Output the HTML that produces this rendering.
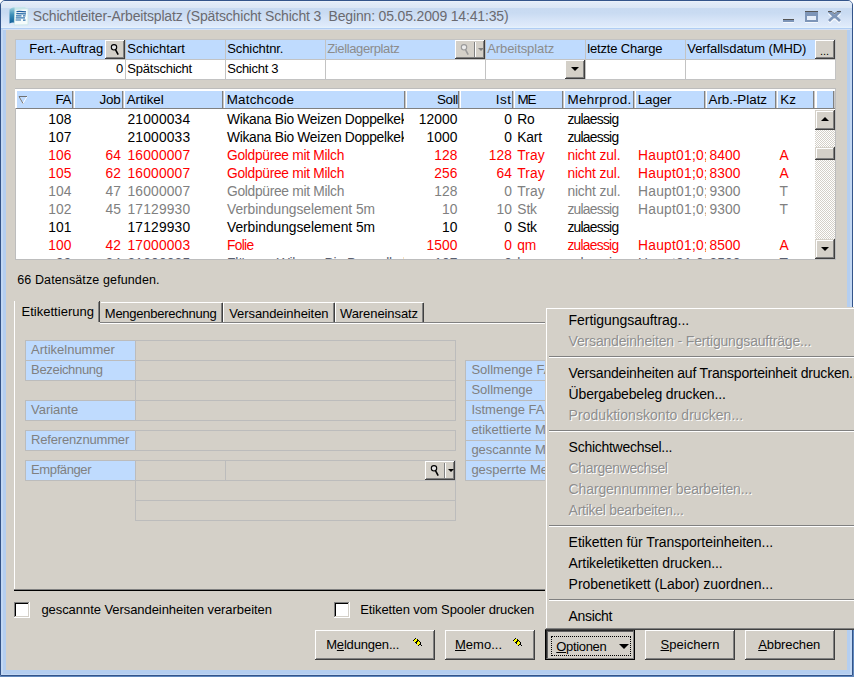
<!DOCTYPE html>
<html><head><meta charset="utf-8"><style>
html,body{margin:0;padding:0;}
body{width:854px;height:677px;position:relative;overflow:hidden;background:#fff;font-family:'Liberation Sans', sans-serif;}
u{text-decoration:underline;text-underline-offset:1px;}
</style></head><body>
<div style="position:absolute;left:0px;top:676px;width:854px;height:1px;background:#6088bd"></div>
<div style="position:absolute;left:853px;top:629px;width:1px;height:48px;background:#6088bd"></div>
<div style="position:absolute;left:0;top:0;width:851px;height:674px;border:1px solid #33548a;border-radius:5px 5px 0 0;background:#b4cef0"></div>
<div style="position:absolute;left:1px;top:1px;width:851px;height:27px;border-radius:4px 4px 0 0;background:linear-gradient(#f0f5fc 0px,#e3ecf8 1px,#dae6f5 6.9px,#c8daf1 7px,#c9dbf2 12px,#d6e4f7 19px,#dfeafa 25px,#e6f3fd 27px)"></div>
<div style="position:absolute;left:1px;top:28px;width:851px;height:1px;background:#b0cdf3"></div>
<div style="position:absolute;left:1px;top:29px;width:851px;height:1px;background:#d6e1f3"></div>
<div style="position:absolute;left:1px;top:29px;width:2px;height:645px;background:#c3d8f3"></div>
<div style="position:absolute;left:850px;top:29px;width:2px;height:646px;background:#c3d8f3"></div>
<div style="position:absolute;left:6px;top:30px;width:841px;height:640px;background:#d4d0c8"></div>
<div style="position:absolute;left:1px;top:674px;width:851px;height:1px;background:#c3d8f3"></div>
<svg style="position:absolute;left:6px;top:4px" width="24" height="24" viewBox="0 0 24 24">
<defs><linearGradient id="ib" x1="0" x2="0" y1="0" y2="1"><stop offset="0" stop-color="#9fd3de"/><stop offset="0.45" stop-color="#3d8fb8"/><stop offset="1" stop-color="#0f5f9a"/></linearGradient></defs>
<path d="M6 3.5 L19.5 3 L19.5 6 L9 6.5 Z" fill="#c6e6ea"/>
<path d="M3.5 5.5 Q6 3 8.5 3.5 L9.5 19 Q6 18 3.5 19.5 Z" fill="url(#ib)"/>
<path d="M9 5.5 L22 4.8 L22 20.8 L8.2 21 Z" fill="#f4fbfb" stroke="#c8e6e6" stroke-width="0.8"/>
<path d="M10.5 7.6 Q13 7 20 7.8" stroke="#1d5c9c" stroke-width="1.2" fill="none"/>
<path d="M10.3 9.7 L20 9.8" stroke="#2368a6" stroke-width="1.2"/>
<path d="M10 11.8 L15.5 11.8 M17 11.8 L19.5 11.8" stroke="#2a6eaa" stroke-width="1.2"/>
<path d="M9.8 13.9 L19 13.9" stroke="#2a6eaa" stroke-width="1.2"/>
<path d="M9.6 16 L15 16 M17 16.1 L19.5 16.1" stroke="#2a6eaa" stroke-width="1.2"/>
</svg>
<span style="position:absolute;left:32.80px;top:6px;font-size:14px;line-height:20px;color:#6a6a70;white-space:pre;letter-spacing:-0.166px;">Schichtleiter-Arbeitsplatz (Spätschicht Schicht 3  Beginn: 05.05.2009 14:41:35)</span>
<div style="position:absolute;left:783px;top:19px;width:11px;height:3px;background:#7d95b8;border-top:1px solid #555;box-sizing:border-box"></div>
<div style="position:absolute;left:783px;top:22px;width:11px;height:1px;background:#f4f8fd"></div>
<div style="position:absolute;left:805px;top:11px;width:13px;height:11px;background:#7d95b8;border-top:1px solid #555;box-sizing:border-box"></div>
<div style="position:absolute;left:807px;top:16px;width:9px;height:4px;background:#e6eefa"></div>
<div style="position:absolute;left:805px;top:22px;width:13px;height:1px;background:#f4f8fd"></div>
<svg style="position:absolute;left:826px;top:9px" width="17" height="15" viewBox="0 0 17 15">
<path d="M3 3 L8.5 8.3 L14 3 M3 12.5 L8.5 7.2 L14 12.5" fill="none" stroke="#f6f9fd" stroke-width="3" transform="translate(0,1)"/>
<path d="M3 2.5 L8.5 7.8 L14 2.5 M3 12 L8.5 6.7 L14 12" fill="none" stroke="#7d95b8" stroke-width="2.6"/>
<path d="M2 2.5 H6 L8.5 5 L11 2.5 H15" fill="none" stroke="#585858" stroke-width="1"/>
</svg>
<div style="position:absolute;left:15px;top:39px;width:821px;height:41px;border:1px solid #c3c3c3;box-sizing:border-box;background:#fff"></div>
<div style="position:absolute;left:16px;top:40px;width:819px;height:19px;background:#bfdbfe"></div>
<div style="position:absolute;left:16px;top:59px;width:819px;height:1px;background:#c3c3c3"></div>
<div style="position:absolute;left:125px;top:40px;width:1px;height:39px;background:#c3c3c3"></div>
<div style="position:absolute;left:225px;top:40px;width:1px;height:39px;background:#c3c3c3"></div>
<div style="position:absolute;left:325px;top:40px;width:1px;height:39px;background:#c3c3c3"></div>
<div style="position:absolute;left:485px;top:40px;width:1px;height:39px;background:#c3c3c3"></div>
<div style="position:absolute;left:585px;top:40px;width:1px;height:39px;background:#c3c3c3"></div>
<div style="position:absolute;left:685px;top:40px;width:1px;height:39px;background:#c3c3c3"></div>
<div style="position:absolute;left:105px;top:40px;width:20px;height:19px;background:#d4d0c8"></div>
<div style="position:absolute;left:105px;top:40px;width:19px;height:1px;background:#fff"></div>
<div style="position:absolute;left:105px;top:40px;width:1px;height:18px;background:#fff"></div>
<div style="position:absolute;left:105px;top:58px;width:20px;height:1px;background:#404040"></div>
<div style="position:absolute;left:124px;top:40px;width:1px;height:19px;background:#404040"></div>
<div style="position:absolute;left:106px;top:57px;width:18px;height:1px;background:#808080"></div>
<div style="position:absolute;left:123px;top:41px;width:1px;height:17px;background:#808080"></div>
<svg style="position:absolute;left:109px;top:42px" width="12" height="15" viewBox="0 0 12 15">
<circle cx="5" cy="5.3" r="2.7" fill="#e4e4e4" stroke="#000" stroke-width="1.1"/>
<path d="M6.6 7.9 L9.2 12.6" stroke="#000" stroke-width="1.6"/>
</svg>
<span style="position:absolute;left:29.20px;top:39px;font-size:13px;line-height:20px;color:#000;white-space:pre;letter-spacing:0.095px;">Fert.-Auftrag</span>
<span style="position:absolute;left:127.30px;top:39px;font-size:13px;line-height:20px;color:#000;white-space:pre;letter-spacing:-0.021px;">Schichtart</span>
<span style="position:absolute;left:227.30px;top:39px;font-size:13px;line-height:20px;color:#000;white-space:pre;letter-spacing:-0.109px;">Schichtnr.</span>
<span style="position:absolute;left:327.30px;top:39px;font-size:13px;line-height:20px;color:#8c8c8c;white-space:pre;letter-spacing:-0.381px;">Ziellagerplatz</span>
<div style="position:absolute;left:455px;top:40px;width:30px;height:19px;background:#d4d0c8"></div>
<div style="position:absolute;left:455px;top:40px;width:29px;height:1px;background:#fff"></div>
<div style="position:absolute;left:455px;top:40px;width:1px;height:18px;background:#fff"></div>
<div style="position:absolute;left:455px;top:58px;width:30px;height:1px;background:#404040"></div>
<div style="position:absolute;left:484px;top:40px;width:1px;height:19px;background:#404040"></div>
<div style="position:absolute;left:456px;top:57px;width:28px;height:1px;background:#808080"></div>
<div style="position:absolute;left:483px;top:41px;width:1px;height:17px;background:#808080"></div>
<svg style="position:absolute;left:459px;top:42px" width="12" height="15" viewBox="0 0 12 15">
<circle cx="5" cy="5.3" r="2.7" fill="#ececec" stroke="#9a9a9a" stroke-width="1.1"/>
<path d="M6.6 7.9 L9.2 12.6" stroke="#9a9a9a" stroke-width="1.6"/>
</svg>
<div style="position:absolute;left:474px;top:42px;width:1px;height:15px;background:#808080"></div>
<div style="position:absolute;left:475px;top:42px;width:1px;height:15px;background:#fff"></div>
<div style="position:absolute;left:478px;top:48px;width:0;height:0;border-left:3px solid transparent;border-right:3px solid transparent;border-top:3px solid #808080"></div>
<span style="position:absolute;left:487.20px;top:39px;font-size:13px;line-height:20px;color:#8c8c8c;white-space:pre;letter-spacing:-0.077px;">Arbeitsplatz</span>
<span style="position:absolute;left:587.30px;top:39px;font-size:13px;line-height:20px;color:#000;white-space:pre;letter-spacing:-0.179px;">letzte Charge</span>
<span style="position:absolute;left:687.30px;top:39px;font-size:13px;line-height:20px;color:#000;white-space:pre;letter-spacing:-0.086px;">Verfallsdatum (MHD)</span>
<div style="position:absolute;left:815px;top:40px;width:20px;height:19px;background:#d4d0c8"></div>
<div style="position:absolute;left:815px;top:40px;width:19px;height:1px;background:#fff"></div>
<div style="position:absolute;left:815px;top:40px;width:1px;height:18px;background:#fff"></div>
<div style="position:absolute;left:815px;top:58px;width:20px;height:1px;background:#404040"></div>
<div style="position:absolute;left:834px;top:40px;width:1px;height:19px;background:#404040"></div>
<div style="position:absolute;left:816px;top:57px;width:18px;height:1px;background:#808080"></div>
<div style="position:absolute;left:833px;top:41px;width:1px;height:17px;background:#808080"></div>
<span style="position:absolute;left:820.00px;top:41px;font-size:11px;line-height:20px;color:#000;white-space:pre;letter-spacing:0.000px;">...</span>
<span style="position:absolute;left:116.00px;top:59px;font-size:13px;line-height:20px;color:#000;white-space:pre;letter-spacing:-0.034px;">0</span>
<span style="position:absolute;left:127.30px;top:59px;font-size:13px;line-height:20px;color:#000;white-space:pre;letter-spacing:-0.228px;">Spätschicht</span>
<span style="position:absolute;left:227.30px;top:59px;font-size:13px;line-height:20px;color:#000;white-space:pre;letter-spacing:-0.276px;">Schicht 3</span>
<div style="position:absolute;left:565px;top:60px;width:20px;height:19px;background:#d4d0c8"></div>
<div style="position:absolute;left:565px;top:60px;width:19px;height:1px;background:#fff"></div>
<div style="position:absolute;left:565px;top:60px;width:1px;height:18px;background:#fff"></div>
<div style="position:absolute;left:565px;top:78px;width:20px;height:1px;background:#404040"></div>
<div style="position:absolute;left:584px;top:60px;width:1px;height:19px;background:#404040"></div>
<div style="position:absolute;left:566px;top:77px;width:18px;height:1px;background:#808080"></div>
<div style="position:absolute;left:583px;top:61px;width:1px;height:17px;background:#808080"></div>
<div style="position:absolute;left:571px;top:67px;width:0;height:0;border-left:4px solid transparent;border-right:4px solid transparent;border-top:4px solid #000"></div>
<div style="position:absolute;left:15px;top:88px;width:821px;height:172px;border:1px solid #bdbdbd;box-sizing:border-box;background:#fff"></div>
<div style="position:absolute;left:15px;top:89px;width:820px;height:2px;background:#fff"></div>
<div style="position:absolute;left:17px;top:91px;width:818px;height:17px;background:#bfdbfe"></div>
<div style="position:absolute;left:16px;top:89px;width:1px;height:19px;background:#fff"></div>
<div style="position:absolute;left:16px;top:108px;width:819px;height:1px;background:#808080"></div>
<div style="position:absolute;left:15px;top:89px;width:1px;height:19px;background:#fff"></div>
<div style="position:absolute;left:72px;top:91px;width:1px;height:17px;background:#808080"></div>
<div style="position:absolute;left:73px;top:91px;width:1px;height:17px;background:#c8c8c8"></div>
<div style="position:absolute;left:74px;top:89px;width:1px;height:19px;background:#fff"></div>
<div style="position:absolute;left:122px;top:91px;width:1px;height:17px;background:#808080"></div>
<div style="position:absolute;left:123px;top:91px;width:1px;height:17px;background:#c8c8c8"></div>
<div style="position:absolute;left:124px;top:89px;width:1px;height:19px;background:#fff"></div>
<div style="position:absolute;left:222px;top:91px;width:1px;height:17px;background:#808080"></div>
<div style="position:absolute;left:223px;top:91px;width:1px;height:17px;background:#c8c8c8"></div>
<div style="position:absolute;left:224px;top:89px;width:1px;height:19px;background:#fff"></div>
<div style="position:absolute;left:404px;top:91px;width:1px;height:17px;background:#808080"></div>
<div style="position:absolute;left:405px;top:91px;width:1px;height:17px;background:#c8c8c8"></div>
<div style="position:absolute;left:406px;top:89px;width:1px;height:19px;background:#fff"></div>
<div style="position:absolute;left:458px;top:91px;width:1px;height:17px;background:#808080"></div>
<div style="position:absolute;left:459px;top:91px;width:1px;height:17px;background:#c8c8c8"></div>
<div style="position:absolute;left:460px;top:89px;width:1px;height:19px;background:#fff"></div>
<div style="position:absolute;left:512px;top:91px;width:1px;height:17px;background:#808080"></div>
<div style="position:absolute;left:513px;top:91px;width:1px;height:17px;background:#c8c8c8"></div>
<div style="position:absolute;left:514px;top:89px;width:1px;height:19px;background:#fff"></div>
<div style="position:absolute;left:562px;top:91px;width:1px;height:17px;background:#808080"></div>
<div style="position:absolute;left:563px;top:91px;width:1px;height:17px;background:#c8c8c8"></div>
<div style="position:absolute;left:564px;top:89px;width:1px;height:19px;background:#fff"></div>
<div style="position:absolute;left:633px;top:91px;width:1px;height:17px;background:#808080"></div>
<div style="position:absolute;left:634px;top:91px;width:1px;height:17px;background:#c8c8c8"></div>
<div style="position:absolute;left:635px;top:89px;width:1px;height:19px;background:#fff"></div>
<div style="position:absolute;left:704px;top:91px;width:1px;height:17px;background:#808080"></div>
<div style="position:absolute;left:705px;top:91px;width:1px;height:17px;background:#c8c8c8"></div>
<div style="position:absolute;left:706px;top:89px;width:1px;height:19px;background:#fff"></div>
<div style="position:absolute;left:775px;top:91px;width:1px;height:17px;background:#808080"></div>
<div style="position:absolute;left:776px;top:91px;width:1px;height:17px;background:#c8c8c8"></div>
<div style="position:absolute;left:777px;top:89px;width:1px;height:19px;background:#fff"></div>
<div style="position:absolute;left:813px;top:91px;width:1px;height:17px;background:#808080"></div>
<div style="position:absolute;left:814px;top:91px;width:1px;height:17px;background:#c8c8c8"></div>
<div style="position:absolute;left:815px;top:89px;width:1px;height:19px;background:#fff"></div>
<div style="position:absolute;left:833px;top:91px;width:1px;height:17px;background:#808080"></div>
<div style="position:absolute;left:834px;top:91px;width:1px;height:17px;background:#c8c8c8"></div>
<div style="position:absolute;left:816px;top:89px;width:1px;height:19px;background:#fff"></div>
<svg style="position:absolute;left:18px;top:95px" width="10" height="9" viewBox="0 0 10 9">
<path d="M1 1.5 H9 L5 8.5 Z" fill="none" stroke="#fff" stroke-width="1"/>
<path d="M1 1.5 H9 M1 1.5 L5 8.5" fill="none" stroke="#707070" stroke-width="1"/>
</svg>
<span style="position:absolute;left:55.50px;top:90px;font-size:13.4px;line-height:20px;color:#000;white-space:pre;letter-spacing:-0.438px;">FA</span>
<span style="position:absolute;left:99.50px;top:90px;font-size:13.4px;line-height:20px;color:#000;white-space:pre;letter-spacing:-0.198px;">Job</span>
<span style="position:absolute;left:126.70px;top:90px;font-size:13.4px;line-height:20px;color:#000;white-space:pre;letter-spacing:-0.031px;">Artikel</span>
<span style="position:absolute;left:226.70px;top:90px;font-size:13.4px;line-height:20px;color:#000;white-space:pre;letter-spacing:0.220px;">Matchcode</span>
<span style="position:absolute;left:437.00px;top:90px;font-size:13.4px;line-height:20px;color:#000;white-space:pre;letter-spacing:-0.336px;">Soll</span>
<span style="position:absolute;left:495.70px;top:90px;font-size:13.4px;line-height:20px;color:#000;white-space:pre;letter-spacing:0.620px;">Ist</span>
<span style="position:absolute;left:517.50px;top:90px;font-size:13.4px;line-height:20px;color:#000;white-space:pre;letter-spacing:-1.047px;">ME</span>
<span style="position:absolute;left:567.50px;top:90px;font-size:13.4px;line-height:20px;color:#000;white-space:pre;letter-spacing:0.330px;">Mehrprod.</span>
<span style="position:absolute;left:637.80px;top:90px;font-size:13.4px;line-height:20px;color:#000;white-space:pre;letter-spacing:-0.150px;">Lager</span>
<span style="position:absolute;left:708.50px;top:90px;font-size:13.4px;line-height:20px;color:#000;white-space:pre;letter-spacing:-0.030px;">Arb.-Platz</span>
<span style="position:absolute;left:780.30px;top:90px;font-size:13.4px;line-height:20px;color:#000;white-space:pre;letter-spacing:0.030px;">Kz</span>
<div style="position:absolute;left:16px;top:109px;width:58px;height:150px;overflow:hidden"><span style="position:absolute;left:48.25px;top:110px;font-size:13.8px;line-height:20px;color:#000;white-space:pre;letter-spacing:0.073px;;left:32.25px;top:1.00px">108</span></div>
<div style="position:absolute;left:124px;top:109px;width:100px;height:150px;overflow:hidden"><span style="position:absolute;left:127.50px;top:110px;font-size:13.8px;line-height:20px;color:#000;white-space:pre;letter-spacing:0.176px;;left:3.50px;top:1.00px">21000034</span></div>
<div style="position:absolute;left:224px;top:109px;width:180px;height:150px;overflow:hidden"><span style="position:absolute;left:227.00px;top:110px;font-size:13.8px;line-height:20px;color:#000;white-space:pre;letter-spacing:-0.300px;;left:3.00px;top:1.00px">Wikana Bio Weizen Doppelkeks</span></div>
<div style="position:absolute;left:406px;top:109px;width:54px;height:150px;overflow:hidden"><span style="position:absolute;left:418.75px;top:110px;font-size:13.8px;line-height:20px;color:#000;white-space:pre;letter-spacing:0.075px;;left:12.75px;top:1.00px">12000</span></div>
<div style="position:absolute;left:460px;top:109px;width:54px;height:150px;overflow:hidden"><span style="position:absolute;left:504.25px;top:110px;font-size:13.8px;line-height:20px;color:#000;white-space:pre;letter-spacing:0.062px;;left:44.25px;top:1.00px">0</span></div>
<div style="position:absolute;left:514px;top:109px;width:50px;height:150px;overflow:hidden"><span style="position:absolute;left:517.30px;top:110px;font-size:13.8px;line-height:20px;color:#000;white-space:pre;letter-spacing:-0.320px;;left:3.30px;top:1.00px">Ro</span></div>
<div style="position:absolute;left:564px;top:109px;width:71px;height:150px;overflow:hidden"><span style="position:absolute;left:567.40px;top:110px;font-size:13.8px;line-height:20px;color:#000;white-space:pre;letter-spacing:-0.726px;;left:3.40px;top:1.00px">zulaessig</span></div>
<div style="position:absolute;left:16px;top:109px;width:58px;height:150px;overflow:hidden"><span style="position:absolute;left:48.25px;top:128px;font-size:13.8px;line-height:20px;color:#000;white-space:pre;letter-spacing:0.073px;;left:32.25px;top:19.00px">107</span></div>
<div style="position:absolute;left:124px;top:109px;width:100px;height:150px;overflow:hidden"><span style="position:absolute;left:127.50px;top:128px;font-size:13.8px;line-height:20px;color:#000;white-space:pre;letter-spacing:0.176px;;left:3.50px;top:19.00px">21000033</span></div>
<div style="position:absolute;left:224px;top:109px;width:180px;height:150px;overflow:hidden"><span style="position:absolute;left:227.00px;top:128px;font-size:13.8px;line-height:20px;color:#000;white-space:pre;letter-spacing:-0.300px;;left:3.00px;top:19.00px">Wikana Bio Weizen Doppelkeks</span></div>
<div style="position:absolute;left:406px;top:109px;width:54px;height:150px;overflow:hidden"><span style="position:absolute;left:426.50px;top:128px;font-size:13.8px;line-height:20px;color:#000;white-space:pre;letter-spacing:0.074px;;left:20.50px;top:19.00px">1000</span></div>
<div style="position:absolute;left:460px;top:109px;width:54px;height:150px;overflow:hidden"><span style="position:absolute;left:504.25px;top:128px;font-size:13.8px;line-height:20px;color:#000;white-space:pre;letter-spacing:0.062px;;left:44.25px;top:19.00px">0</span></div>
<div style="position:absolute;left:514px;top:109px;width:50px;height:150px;overflow:hidden"><span style="position:absolute;left:517.30px;top:128px;font-size:13.8px;line-height:20px;color:#000;white-space:pre;letter-spacing:-0.203px;;left:3.30px;top:19.00px">Kart</span></div>
<div style="position:absolute;left:564px;top:109px;width:71px;height:150px;overflow:hidden"><span style="position:absolute;left:567.40px;top:128px;font-size:13.8px;line-height:20px;color:#000;white-space:pre;letter-spacing:-0.726px;;left:3.40px;top:19.00px">zulaessig</span></div>
<div style="position:absolute;left:16px;top:109px;width:58px;height:150px;overflow:hidden"><span style="position:absolute;left:48.25px;top:146px;font-size:13.8px;line-height:20px;color:#ff0000;white-space:pre;letter-spacing:0.073px;;left:32.25px;top:37.00px">106</span></div>
<div style="position:absolute;left:74px;top:109px;width:50px;height:150px;overflow:hidden"><span style="position:absolute;left:105.50px;top:146px;font-size:13.8px;line-height:20px;color:#ff0000;white-space:pre;letter-spacing:0.070px;;left:31.50px;top:37.00px">64</span></div>
<div style="position:absolute;left:124px;top:109px;width:100px;height:150px;overflow:hidden"><span style="position:absolute;left:127.50px;top:146px;font-size:13.8px;line-height:20px;color:#ff0000;white-space:pre;letter-spacing:0.176px;;left:3.50px;top:37.00px">16000007</span></div>
<div style="position:absolute;left:224px;top:109px;width:180px;height:150px;overflow:hidden"><span style="position:absolute;left:227.00px;top:146px;font-size:13.8px;line-height:20px;color:#ff0000;white-space:pre;letter-spacing:-0.299px;;left:3.00px;top:37.00px">Goldpüree mit Milch</span></div>
<div style="position:absolute;left:406px;top:109px;width:54px;height:150px;overflow:hidden"><span style="position:absolute;left:434.25px;top:146px;font-size:13.8px;line-height:20px;color:#ff0000;white-space:pre;letter-spacing:0.073px;;left:28.25px;top:37.00px">128</span></div>
<div style="position:absolute;left:460px;top:109px;width:54px;height:150px;overflow:hidden"><span style="position:absolute;left:488.75px;top:146px;font-size:13.8px;line-height:20px;color:#ff0000;white-space:pre;letter-spacing:0.073px;;left:28.75px;top:37.00px">128</span></div>
<div style="position:absolute;left:514px;top:109px;width:50px;height:150px;overflow:hidden"><span style="position:absolute;left:517.30px;top:146px;font-size:13.8px;line-height:20px;color:#ff0000;white-space:pre;letter-spacing:0.077px;;left:3.30px;top:37.00px">Tray</span></div>
<div style="position:absolute;left:564px;top:109px;width:71px;height:150px;overflow:hidden"><span style="position:absolute;left:567.40px;top:146px;font-size:13.8px;line-height:20px;color:#ff0000;white-space:pre;letter-spacing:-0.145px;;left:3.40px;top:37.00px">nicht zul.</span></div>
<div style="position:absolute;left:635px;top:109px;width:71px;height:150px;overflow:hidden"><span style="position:absolute;left:638.00px;top:146px;font-size:13.8px;line-height:20px;color:#ff0000;white-space:pre;letter-spacing:0.250px;;left:3.00px;top:37.00px">Haupt01;0;0</span></div>
<div style="position:absolute;left:706px;top:109px;width:71px;height:150px;overflow:hidden"><span style="position:absolute;left:709.50px;top:146px;font-size:13.8px;line-height:20px;color:#ff0000;white-space:pre;letter-spacing:0.074px;;left:3.50px;top:37.00px">8400</span></div>
<div style="position:absolute;left:777px;top:109px;width:38px;height:150px;overflow:hidden"><span style="position:absolute;left:779.50px;top:146px;font-size:13.8px;line-height:20px;color:#ff0000;white-space:pre;letter-spacing:-0.703px;;left:2.50px;top:37.00px">A</span></div>
<div style="position:absolute;left:16px;top:109px;width:58px;height:150px;overflow:hidden"><span style="position:absolute;left:48.25px;top:164px;font-size:13.8px;line-height:20px;color:#ff0000;white-space:pre;letter-spacing:0.073px;;left:32.25px;top:55.00px">105</span></div>
<div style="position:absolute;left:74px;top:109px;width:50px;height:150px;overflow:hidden"><span style="position:absolute;left:105.50px;top:164px;font-size:13.8px;line-height:20px;color:#ff0000;white-space:pre;letter-spacing:0.070px;;left:31.50px;top:55.00px">62</span></div>
<div style="position:absolute;left:124px;top:109px;width:100px;height:150px;overflow:hidden"><span style="position:absolute;left:127.50px;top:164px;font-size:13.8px;line-height:20px;color:#ff0000;white-space:pre;letter-spacing:0.176px;;left:3.50px;top:55.00px">16000007</span></div>
<div style="position:absolute;left:224px;top:109px;width:180px;height:150px;overflow:hidden"><span style="position:absolute;left:227.00px;top:164px;font-size:13.8px;line-height:20px;color:#ff0000;white-space:pre;letter-spacing:-0.299px;;left:3.00px;top:55.00px">Goldpüree mit Milch</span></div>
<div style="position:absolute;left:406px;top:109px;width:54px;height:150px;overflow:hidden"><span style="position:absolute;left:434.25px;top:164px;font-size:13.8px;line-height:20px;color:#ff0000;white-space:pre;letter-spacing:0.073px;;left:28.25px;top:55.00px">256</span></div>
<div style="position:absolute;left:460px;top:109px;width:54px;height:150px;overflow:hidden"><span style="position:absolute;left:496.50px;top:164px;font-size:13.8px;line-height:20px;color:#ff0000;white-space:pre;letter-spacing:0.070px;;left:36.50px;top:55.00px">64</span></div>
<div style="position:absolute;left:514px;top:109px;width:50px;height:150px;overflow:hidden"><span style="position:absolute;left:517.30px;top:164px;font-size:13.8px;line-height:20px;color:#ff0000;white-space:pre;letter-spacing:0.077px;;left:3.30px;top:55.00px">Tray</span></div>
<div style="position:absolute;left:564px;top:109px;width:71px;height:150px;overflow:hidden"><span style="position:absolute;left:567.40px;top:164px;font-size:13.8px;line-height:20px;color:#ff0000;white-space:pre;letter-spacing:-0.145px;;left:3.40px;top:55.00px">nicht zul.</span></div>
<div style="position:absolute;left:635px;top:109px;width:71px;height:150px;overflow:hidden"><span style="position:absolute;left:638.00px;top:164px;font-size:13.8px;line-height:20px;color:#ff0000;white-space:pre;letter-spacing:0.250px;;left:3.00px;top:55.00px">Haupt01;0;0</span></div>
<div style="position:absolute;left:706px;top:109px;width:71px;height:150px;overflow:hidden"><span style="position:absolute;left:709.50px;top:164px;font-size:13.8px;line-height:20px;color:#ff0000;white-space:pre;letter-spacing:0.074px;;left:3.50px;top:55.00px">8300</span></div>
<div style="position:absolute;left:777px;top:109px;width:38px;height:150px;overflow:hidden"><span style="position:absolute;left:779.50px;top:164px;font-size:13.8px;line-height:20px;color:#ff0000;white-space:pre;letter-spacing:-0.703px;;left:2.50px;top:55.00px">A</span></div>
<div style="position:absolute;left:16px;top:109px;width:58px;height:150px;overflow:hidden"><span style="position:absolute;left:48.25px;top:182px;font-size:13.8px;line-height:20px;color:#808080;white-space:pre;letter-spacing:0.073px;;left:32.25px;top:73.00px">104</span></div>
<div style="position:absolute;left:74px;top:109px;width:50px;height:150px;overflow:hidden"><span style="position:absolute;left:105.50px;top:182px;font-size:13.8px;line-height:20px;color:#808080;white-space:pre;letter-spacing:0.070px;;left:31.50px;top:73.00px">47</span></div>
<div style="position:absolute;left:124px;top:109px;width:100px;height:150px;overflow:hidden"><span style="position:absolute;left:127.50px;top:182px;font-size:13.8px;line-height:20px;color:#808080;white-space:pre;letter-spacing:0.176px;;left:3.50px;top:73.00px">16000007</span></div>
<div style="position:absolute;left:224px;top:109px;width:180px;height:150px;overflow:hidden"><span style="position:absolute;left:227.00px;top:182px;font-size:13.8px;line-height:20px;color:#808080;white-space:pre;letter-spacing:-0.299px;;left:3.00px;top:73.00px">Goldpüree mit Milch</span></div>
<div style="position:absolute;left:406px;top:109px;width:54px;height:150px;overflow:hidden"><span style="position:absolute;left:434.25px;top:182px;font-size:13.8px;line-height:20px;color:#808080;white-space:pre;letter-spacing:0.073px;;left:28.25px;top:73.00px">128</span></div>
<div style="position:absolute;left:460px;top:109px;width:54px;height:150px;overflow:hidden"><span style="position:absolute;left:504.25px;top:182px;font-size:13.8px;line-height:20px;color:#808080;white-space:pre;letter-spacing:0.062px;;left:44.25px;top:73.00px">0</span></div>
<div style="position:absolute;left:514px;top:109px;width:50px;height:150px;overflow:hidden"><span style="position:absolute;left:517.30px;top:182px;font-size:13.8px;line-height:20px;color:#808080;white-space:pre;letter-spacing:0.077px;;left:3.30px;top:73.00px">Tray</span></div>
<div style="position:absolute;left:564px;top:109px;width:71px;height:150px;overflow:hidden"><span style="position:absolute;left:567.40px;top:182px;font-size:13.8px;line-height:20px;color:#808080;white-space:pre;letter-spacing:-0.145px;;left:3.40px;top:73.00px">nicht zul.</span></div>
<div style="position:absolute;left:635px;top:109px;width:71px;height:150px;overflow:hidden"><span style="position:absolute;left:638.00px;top:182px;font-size:13.8px;line-height:20px;color:#808080;white-space:pre;letter-spacing:0.250px;;left:3.00px;top:73.00px">Haupt01;0;0</span></div>
<div style="position:absolute;left:706px;top:109px;width:71px;height:150px;overflow:hidden"><span style="position:absolute;left:709.50px;top:182px;font-size:13.8px;line-height:20px;color:#808080;white-space:pre;letter-spacing:0.074px;;left:3.50px;top:73.00px">9300</span></div>
<div style="position:absolute;left:777px;top:109px;width:38px;height:150px;overflow:hidden"><span style="position:absolute;left:779.50px;top:182px;font-size:13.8px;line-height:20px;color:#808080;white-space:pre;letter-spacing:0.062px;;left:2.50px;top:73.00px">T</span></div>
<div style="position:absolute;left:16px;top:109px;width:58px;height:150px;overflow:hidden"><span style="position:absolute;left:48.25px;top:200px;font-size:13.8px;line-height:20px;color:#808080;white-space:pre;letter-spacing:0.073px;;left:32.25px;top:91.00px">102</span></div>
<div style="position:absolute;left:74px;top:109px;width:50px;height:150px;overflow:hidden"><span style="position:absolute;left:105.50px;top:200px;font-size:13.8px;line-height:20px;color:#808080;white-space:pre;letter-spacing:0.070px;;left:31.50px;top:91.00px">45</span></div>
<div style="position:absolute;left:124px;top:109px;width:100px;height:150px;overflow:hidden"><span style="position:absolute;left:127.50px;top:200px;font-size:13.8px;line-height:20px;color:#808080;white-space:pre;letter-spacing:0.176px;;left:3.50px;top:91.00px">17129930</span></div>
<div style="position:absolute;left:224px;top:109px;width:180px;height:150px;overflow:hidden"><span style="position:absolute;left:227.00px;top:200px;font-size:13.8px;line-height:20px;color:#808080;white-space:pre;letter-spacing:-0.038px;;left:3.00px;top:91.00px">Verbindungselement 5m</span></div>
<div style="position:absolute;left:406px;top:109px;width:54px;height:150px;overflow:hidden"><span style="position:absolute;left:442.00px;top:200px;font-size:13.8px;line-height:20px;color:#808080;white-space:pre;letter-spacing:0.070px;;left:36.00px;top:91.00px">10</span></div>
<div style="position:absolute;left:460px;top:109px;width:54px;height:150px;overflow:hidden"><span style="position:absolute;left:496.50px;top:200px;font-size:13.8px;line-height:20px;color:#808080;white-space:pre;letter-spacing:0.070px;;left:36.50px;top:91.00px">10</span></div>
<div style="position:absolute;left:514px;top:109px;width:50px;height:150px;overflow:hidden"><span style="position:absolute;left:517.30px;top:200px;font-size:13.8px;line-height:20px;color:#808080;white-space:pre;letter-spacing:-0.112px;;left:3.30px;top:91.00px">Stk</span></div>
<div style="position:absolute;left:564px;top:109px;width:71px;height:150px;overflow:hidden"><span style="position:absolute;left:567.40px;top:200px;font-size:13.8px;line-height:20px;color:#808080;white-space:pre;letter-spacing:-0.726px;;left:3.40px;top:91.00px">zulaessig</span></div>
<div style="position:absolute;left:635px;top:109px;width:71px;height:150px;overflow:hidden"><span style="position:absolute;left:638.00px;top:200px;font-size:13.8px;line-height:20px;color:#808080;white-space:pre;letter-spacing:0.250px;;left:3.00px;top:91.00px">Haupt01;0;0</span></div>
<div style="position:absolute;left:706px;top:109px;width:71px;height:150px;overflow:hidden"><span style="position:absolute;left:709.50px;top:200px;font-size:13.8px;line-height:20px;color:#808080;white-space:pre;letter-spacing:0.074px;;left:3.50px;top:91.00px">9300</span></div>
<div style="position:absolute;left:777px;top:109px;width:38px;height:150px;overflow:hidden"><span style="position:absolute;left:779.50px;top:200px;font-size:13.8px;line-height:20px;color:#808080;white-space:pre;letter-spacing:0.062px;;left:2.50px;top:91.00px">T</span></div>
<div style="position:absolute;left:16px;top:109px;width:58px;height:150px;overflow:hidden"><span style="position:absolute;left:48.25px;top:218px;font-size:13.8px;line-height:20px;color:#000;white-space:pre;letter-spacing:0.073px;;left:32.25px;top:109.00px">101</span></div>
<div style="position:absolute;left:124px;top:109px;width:100px;height:150px;overflow:hidden"><span style="position:absolute;left:127.50px;top:218px;font-size:13.8px;line-height:20px;color:#000;white-space:pre;letter-spacing:0.176px;;left:3.50px;top:109.00px">17129930</span></div>
<div style="position:absolute;left:224px;top:109px;width:180px;height:150px;overflow:hidden"><span style="position:absolute;left:227.00px;top:218px;font-size:13.8px;line-height:20px;color:#000;white-space:pre;letter-spacing:-0.038px;;left:3.00px;top:109.00px">Verbindungselement 5m</span></div>
<div style="position:absolute;left:406px;top:109px;width:54px;height:150px;overflow:hidden"><span style="position:absolute;left:442.00px;top:218px;font-size:13.8px;line-height:20px;color:#000;white-space:pre;letter-spacing:0.070px;;left:36.00px;top:109.00px">10</span></div>
<div style="position:absolute;left:460px;top:109px;width:54px;height:150px;overflow:hidden"><span style="position:absolute;left:504.25px;top:218px;font-size:13.8px;line-height:20px;color:#000;white-space:pre;letter-spacing:0.062px;;left:44.25px;top:109.00px">0</span></div>
<div style="position:absolute;left:514px;top:109px;width:50px;height:150px;overflow:hidden"><span style="position:absolute;left:517.30px;top:218px;font-size:13.8px;line-height:20px;color:#000;white-space:pre;letter-spacing:-0.112px;;left:3.30px;top:109.00px">Stk</span></div>
<div style="position:absolute;left:564px;top:109px;width:71px;height:150px;overflow:hidden"><span style="position:absolute;left:567.40px;top:218px;font-size:13.8px;line-height:20px;color:#000;white-space:pre;letter-spacing:-0.726px;;left:3.40px;top:109.00px">zulaessig</span></div>
<div style="position:absolute;left:16px;top:109px;width:58px;height:150px;overflow:hidden"><span style="position:absolute;left:48.25px;top:236px;font-size:13.8px;line-height:20px;color:#ff0000;white-space:pre;letter-spacing:0.073px;;left:32.25px;top:127.00px">100</span></div>
<div style="position:absolute;left:74px;top:109px;width:50px;height:150px;overflow:hidden"><span style="position:absolute;left:105.50px;top:236px;font-size:13.8px;line-height:20px;color:#ff0000;white-space:pre;letter-spacing:0.070px;;left:31.50px;top:127.00px">42</span></div>
<div style="position:absolute;left:124px;top:109px;width:100px;height:150px;overflow:hidden"><span style="position:absolute;left:127.50px;top:236px;font-size:13.8px;line-height:20px;color:#ff0000;white-space:pre;letter-spacing:0.176px;;left:3.50px;top:127.00px">17000003</span></div>
<div style="position:absolute;left:224px;top:109px;width:180px;height:150px;overflow:hidden"><span style="position:absolute;left:227.00px;top:236px;font-size:13.8px;line-height:20px;color:#ff0000;white-space:pre;letter-spacing:-0.681px;;left:3.00px;top:127.00px">Folie</span></div>
<div style="position:absolute;left:406px;top:109px;width:54px;height:150px;overflow:hidden"><span style="position:absolute;left:426.50px;top:236px;font-size:13.8px;line-height:20px;color:#ff0000;white-space:pre;letter-spacing:0.074px;;left:20.50px;top:127.00px">1500</span></div>
<div style="position:absolute;left:460px;top:109px;width:54px;height:150px;overflow:hidden"><span style="position:absolute;left:504.25px;top:236px;font-size:13.8px;line-height:20px;color:#ff0000;white-space:pre;letter-spacing:0.062px;;left:44.25px;top:127.00px">0</span></div>
<div style="position:absolute;left:514px;top:109px;width:50px;height:150px;overflow:hidden"><span style="position:absolute;left:517.30px;top:236px;font-size:13.8px;line-height:20px;color:#ff0000;white-space:pre;letter-spacing:-0.186px;;left:3.30px;top:127.00px">qm</span></div>
<div style="position:absolute;left:564px;top:109px;width:71px;height:150px;overflow:hidden"><span style="position:absolute;left:567.40px;top:236px;font-size:13.8px;line-height:20px;color:#ff0000;white-space:pre;letter-spacing:-0.726px;;left:3.40px;top:127.00px">zulaessig</span></div>
<div style="position:absolute;left:635px;top:109px;width:71px;height:150px;overflow:hidden"><span style="position:absolute;left:638.00px;top:236px;font-size:13.8px;line-height:20px;color:#ff0000;white-space:pre;letter-spacing:0.250px;;left:3.00px;top:127.00px">Haupt01;0;0</span></div>
<div style="position:absolute;left:706px;top:109px;width:71px;height:150px;overflow:hidden"><span style="position:absolute;left:709.50px;top:236px;font-size:13.8px;line-height:20px;color:#ff0000;white-space:pre;letter-spacing:0.074px;;left:3.50px;top:127.00px">8500</span></div>
<div style="position:absolute;left:777px;top:109px;width:38px;height:150px;overflow:hidden"><span style="position:absolute;left:779.50px;top:236px;font-size:13.8px;line-height:20px;color:#ff0000;white-space:pre;letter-spacing:-0.703px;;left:2.50px;top:127.00px">A</span></div>
<div style="position:absolute;left:16px;top:109px;width:58px;height:150px;overflow:hidden"><span style="position:absolute;left:56.00px;top:254px;font-size:13.8px;line-height:20px;color:#5a6070;white-space:pre;letter-spacing:0.070px;;left:40.00px;top:145.00px">99</span></div>
<div style="position:absolute;left:74px;top:109px;width:50px;height:150px;overflow:hidden"><span style="position:absolute;left:105.50px;top:254px;font-size:13.8px;line-height:20px;color:#5a6070;white-space:pre;letter-spacing:0.070px;;left:31.50px;top:145.00px">34</span></div>
<div style="position:absolute;left:124px;top:109px;width:100px;height:150px;overflow:hidden"><span style="position:absolute;left:127.50px;top:254px;font-size:13.8px;line-height:20px;color:#5a6070;white-space:pre;letter-spacing:0.176px;;left:3.50px;top:145.00px">21000035</span></div>
<div style="position:absolute;left:224px;top:109px;width:180px;height:150px;overflow:hidden"><span style="position:absolute;left:227.00px;top:254px;font-size:13.8px;line-height:20px;color:#5a6070;white-space:pre;letter-spacing:-0.300px;;left:3.00px;top:145.00px">Flüssen Wikana Bio Doppelkeks</span></div>
<div style="position:absolute;left:406px;top:109px;width:54px;height:150px;overflow:hidden"><span style="position:absolute;left:434.25px;top:254px;font-size:13.8px;line-height:20px;color:#5a6070;white-space:pre;letter-spacing:0.073px;;left:28.25px;top:145.00px">107</span></div>
<div style="position:absolute;left:460px;top:109px;width:54px;height:150px;overflow:hidden"><span style="position:absolute;left:504.25px;top:254px;font-size:13.8px;line-height:20px;color:#5a6070;white-space:pre;letter-spacing:0.062px;;left:44.25px;top:145.00px">0</span></div>
<div style="position:absolute;left:514px;top:109px;width:50px;height:150px;overflow:hidden"><span style="position:absolute;left:517.30px;top:254px;font-size:13.8px;line-height:20px;color:#5a6070;white-space:pre;letter-spacing:0.000px;;left:3.30px;top:145.00px">kg</span></div>
<div style="position:absolute;left:564px;top:109px;width:71px;height:150px;overflow:hidden"><span style="position:absolute;left:567.40px;top:254px;font-size:13.8px;line-height:20px;color:#5a6070;white-space:pre;letter-spacing:-0.726px;;left:3.40px;top:145.00px">zulaessig</span></div>
<div style="position:absolute;left:635px;top:109px;width:71px;height:150px;overflow:hidden"><span style="position:absolute;left:638.00px;top:254px;font-size:13.8px;line-height:20px;color:#5a6070;white-space:pre;letter-spacing:0.250px;;left:3.00px;top:145.00px">Haupt01;0;0</span></div>
<div style="position:absolute;left:706px;top:109px;width:71px;height:150px;overflow:hidden"><span style="position:absolute;left:709.50px;top:254px;font-size:13.8px;line-height:20px;color:#5a6070;white-space:pre;letter-spacing:0.074px;;left:3.50px;top:145.00px">8500</span></div>
<div style="position:absolute;left:777px;top:109px;width:38px;height:150px;overflow:hidden"><span style="position:absolute;left:779.50px;top:254px;font-size:13.8px;line-height:20px;color:#5a6070;white-space:pre;letter-spacing:0.062px;;left:2.50px;top:145.00px">T</span></div>
<div style="position:absolute;left:815px;top:110px;width:20px;height:149px;background-color:#fff;background-image:linear-gradient(45deg,#d4d0c8 25%,transparent 25%,transparent 75%,#d4d0c8 75%),linear-gradient(45deg,#d4d0c8 25%,transparent 25%,transparent 75%,#d4d0c8 75%);background-size:2px 2px;background-position:0 0,1px 1px"></div>
<div style="position:absolute;left:815px;top:110px;width:20px;height:20px;background:#d4d0c8"></div>
<div style="position:absolute;left:815px;top:110px;width:19px;height:1px;background:#d4d0c8"></div>
<div style="position:absolute;left:815px;top:110px;width:1px;height:19px;background:#d4d0c8"></div>
<div style="position:absolute;left:816px;top:111px;width:17px;height:1px;background:#fff"></div>
<div style="position:absolute;left:816px;top:111px;width:1px;height:17px;background:#fff"></div>
<div style="position:absolute;left:815px;top:129px;width:20px;height:1px;background:#404040"></div>
<div style="position:absolute;left:834px;top:110px;width:1px;height:20px;background:#404040"></div>
<div style="position:absolute;left:816px;top:128px;width:18px;height:1px;background:#808080"></div>
<div style="position:absolute;left:833px;top:111px;width:1px;height:18px;background:#808080"></div>
<div style="position:absolute;left:821px;top:117px;width:0;height:0;border-left:4px solid transparent;border-right:4px solid transparent;border-bottom:4px solid #000"></div>
<div style="position:absolute;left:815px;top:147px;width:20px;height:13px;background:#d4d0c8"></div>
<div style="position:absolute;left:815px;top:147px;width:19px;height:1px;background:#d4d0c8"></div>
<div style="position:absolute;left:815px;top:147px;width:1px;height:12px;background:#d4d0c8"></div>
<div style="position:absolute;left:816px;top:148px;width:17px;height:1px;background:#fff"></div>
<div style="position:absolute;left:816px;top:148px;width:1px;height:10px;background:#fff"></div>
<div style="position:absolute;left:815px;top:159px;width:20px;height:1px;background:#404040"></div>
<div style="position:absolute;left:834px;top:147px;width:1px;height:13px;background:#404040"></div>
<div style="position:absolute;left:816px;top:158px;width:18px;height:1px;background:#808080"></div>
<div style="position:absolute;left:833px;top:148px;width:1px;height:11px;background:#808080"></div>
<div style="position:absolute;left:815px;top:239px;width:20px;height:20px;background:#d4d0c8"></div>
<div style="position:absolute;left:815px;top:239px;width:19px;height:1px;background:#d4d0c8"></div>
<div style="position:absolute;left:815px;top:239px;width:1px;height:19px;background:#d4d0c8"></div>
<div style="position:absolute;left:816px;top:240px;width:17px;height:1px;background:#fff"></div>
<div style="position:absolute;left:816px;top:240px;width:1px;height:17px;background:#fff"></div>
<div style="position:absolute;left:815px;top:258px;width:20px;height:1px;background:#404040"></div>
<div style="position:absolute;left:834px;top:239px;width:1px;height:20px;background:#404040"></div>
<div style="position:absolute;left:816px;top:257px;width:18px;height:1px;background:#808080"></div>
<div style="position:absolute;left:833px;top:240px;width:1px;height:18px;background:#808080"></div>
<div style="position:absolute;left:821px;top:247px;width:0;height:0;border-left:4px solid transparent;border-right:4px solid transparent;border-top:4px solid #000"></div>
<span style="position:absolute;left:17.20px;top:270px;font-size:12.5px;line-height:20px;color:#000;white-space:pre;letter-spacing:0.122px;">66 Datensätze gefunden.</span>
<div style="position:absolute;left:101px;top:302px;width:121px;height:1px;background:#fff"></div>
<div style="position:absolute;left:221px;top:303px;width:1px;height:19px;background:#808080"></div>
<div style="position:absolute;left:222px;top:303px;width:1px;height:19px;background:#404040"></div>
<span style="position:absolute;left:104.80px;top:304px;font-size:13px;line-height:20px;color:#000;white-space:pre;letter-spacing:-0.247px;">Mengenberechnung</span>
<div style="position:absolute;left:223px;top:302px;width:111px;height:1px;background:#fff"></div>
<div style="position:absolute;left:333px;top:303px;width:1px;height:19px;background:#808080"></div>
<div style="position:absolute;left:334px;top:303px;width:1px;height:19px;background:#404040"></div>
<span style="position:absolute;left:229.20px;top:304px;font-size:13px;line-height:20px;color:#000;white-space:pre;letter-spacing:-0.074px;">Versandeinheiten</span>
<div style="position:absolute;left:335px;top:302px;width:88px;height:1px;background:#fff"></div>
<div style="position:absolute;left:422px;top:303px;width:1px;height:19px;background:#808080"></div>
<div style="position:absolute;left:423px;top:303px;width:1px;height:19px;background:#404040"></div>
<span style="position:absolute;left:340.00px;top:304px;font-size:13px;line-height:20px;color:#000;white-space:pre;letter-spacing:-0.083px;">Wareneinsatz</span>
<div style="position:absolute;left:223px;top:303px;width:1px;height:19px;background:#fff"></div>
<div style="position:absolute;left:335px;top:303px;width:1px;height:19px;background:#fff"></div>
<div style="position:absolute;left:100px;top:322px;width:746px;height:1px;background:#808080"></div>
<div style="position:absolute;left:100px;top:323px;width:746px;height:1px;background:#fff"></div>
<div style="position:absolute;left:14px;top:301px;width:1px;height:289px;background:#fff"></div>
<div style="position:absolute;left:99px;top:301px;width:1px;height:21px;background:#404040"></div>
<div style="position:absolute;left:98px;top:302px;width:1px;height:20px;background:#808080"></div>
<span style="position:absolute;left:21.50px;top:302px;font-size:13px;line-height:20px;color:#000;white-space:pre;letter-spacing:0.018px;">Etikettierung</span>
<div style="position:absolute;left:14px;top:589px;width:832px;height:1px;background:#808080"></div>
<div style="position:absolute;left:14px;top:590px;width:832px;height:1px;background:#000"></div>
<div style="position:absolute;left:25px;top:340px;width:111px;height:21px;border:1px solid #bcbcbc;box-sizing:border-box;background:#bfdbfe"></div>
<div style="position:absolute;left:25px;top:360px;width:111px;height:21px;border:1px solid #bcbcbc;box-sizing:border-box;background:#bfdbfe"></div>
<div style="position:absolute;left:135px;top:340px;width:321px;height:21px;border:1px solid #bcbcbc;box-sizing:border-box"></div>
<div style="position:absolute;left:135px;top:360px;width:321px;height:21px;border:1px solid #bcbcbc;box-sizing:border-box"></div>
<div style="position:absolute;left:135px;top:380px;width:321px;height:21px;border:1px solid #bcbcbc;box-sizing:border-box"></div>
<span style="position:absolute;left:31.10px;top:340px;font-size:13px;line-height:20px;color:#808080;white-space:pre;letter-spacing:-0.007px;">Artikelnummer</span>
<span style="position:absolute;left:31.10px;top:360px;font-size:13px;line-height:20px;color:#808080;white-space:pre;letter-spacing:-0.334px;">Bezeichnung</span>
<div style="position:absolute;left:25px;top:400px;width:111px;height:21px;border:1px solid #bcbcbc;box-sizing:border-box;background:#bfdbfe"></div>
<div style="position:absolute;left:135px;top:400px;width:321px;height:21px;border:1px solid #bcbcbc;box-sizing:border-box"></div>
<span style="position:absolute;left:31.10px;top:400px;font-size:13px;line-height:20px;color:#808080;white-space:pre;letter-spacing:-0.059px;">Variante</span>
<div style="position:absolute;left:25px;top:430px;width:111px;height:21px;border:1px solid #bcbcbc;box-sizing:border-box;background:#bfdbfe"></div>
<div style="position:absolute;left:135px;top:430px;width:321px;height:21px;border:1px solid #bcbcbc;box-sizing:border-box"></div>
<span style="position:absolute;left:31.10px;top:430px;font-size:13px;line-height:20px;color:#808080;white-space:pre;letter-spacing:-0.174px;">Referenznummer</span>
<div style="position:absolute;left:25px;top:460px;width:111px;height:21px;border:1px solid #bcbcbc;box-sizing:border-box;background:#bfdbfe"></div>
<div style="position:absolute;left:135px;top:460px;width:91px;height:21px;border:1px solid #bcbcbc;box-sizing:border-box"></div>
<div style="position:absolute;left:225px;top:460px;width:231px;height:21px;border:1px solid #bcbcbc;box-sizing:border-box"></div>
<div style="position:absolute;left:135px;top:480px;width:321px;height:21px;border:1px solid #bcbcbc;box-sizing:border-box"></div>
<div style="position:absolute;left:135px;top:500px;width:321px;height:21px;border:1px solid #bcbcbc;box-sizing:border-box"></div>
<span style="position:absolute;left:31.10px;top:460px;font-size:13px;line-height:20px;color:#808080;white-space:pre;letter-spacing:-0.399px;">Empfänger</span>
<div style="position:absolute;left:425px;top:461px;width:30px;height:19px;background:#d4d0c8"></div>
<div style="position:absolute;left:425px;top:461px;width:29px;height:1px;background:#fff"></div>
<div style="position:absolute;left:425px;top:461px;width:1px;height:18px;background:#fff"></div>
<div style="position:absolute;left:425px;top:479px;width:30px;height:1px;background:#404040"></div>
<div style="position:absolute;left:454px;top:461px;width:1px;height:19px;background:#404040"></div>
<div style="position:absolute;left:426px;top:478px;width:28px;height:1px;background:#808080"></div>
<div style="position:absolute;left:453px;top:462px;width:1px;height:17px;background:#808080"></div>
<svg style="position:absolute;left:429px;top:463px" width="12" height="15" viewBox="0 0 12 15">
<circle cx="5" cy="5.3" r="2.7" fill="#e4e4e4" stroke="#000" stroke-width="1.1"/>
<path d="M6.6 7.9 L9.2 12.6" stroke="#000" stroke-width="1.6"/>
</svg>
<div style="position:absolute;left:444px;top:463px;width:1px;height:15px;background:#808080"></div>
<div style="position:absolute;left:445px;top:463px;width:1px;height:15px;background:#fff"></div>
<div style="position:absolute;left:448px;top:469px;width:0;height:0;border-left:3px solid transparent;border-right:3px solid transparent;border-top:3px solid #000"></div>
<div style="position:absolute;left:465px;top:360px;width:100px;height:21px;border:1px solid #bcbcbc;box-sizing:border-box;background:#bfdbfe"></div>
<span style="position:absolute;left:471.40px;top:360px;font-size:13px;line-height:20px;color:#808080;white-space:pre;letter-spacing:0.000px;">Sollmenge FA</span>
<div style="position:absolute;left:465px;top:380px;width:100px;height:21px;border:1px solid #bcbcbc;box-sizing:border-box;background:#bfdbfe"></div>
<span style="position:absolute;left:471.40px;top:380px;font-size:13px;line-height:20px;color:#808080;white-space:pre;letter-spacing:0.000px;">Sollmenge</span>
<div style="position:absolute;left:465px;top:400px;width:100px;height:21px;border:1px solid #bcbcbc;box-sizing:border-box;background:#bfdbfe"></div>
<span style="position:absolute;left:471.40px;top:400px;font-size:13px;line-height:20px;color:#808080;white-space:pre;letter-spacing:0.000px;">Istmenge FA</span>
<div style="position:absolute;left:465px;top:420px;width:100px;height:21px;border:1px solid #bcbcbc;box-sizing:border-box;background:#bfdbfe"></div>
<span style="position:absolute;left:471.40px;top:420px;font-size:13px;line-height:20px;color:#808080;white-space:pre;letter-spacing:0.000px;">etikettierte Menge</span>
<div style="position:absolute;left:465px;top:440px;width:100px;height:21px;border:1px solid #bcbcbc;box-sizing:border-box;background:#bfdbfe"></div>
<span style="position:absolute;left:471.40px;top:440px;font-size:13px;line-height:20px;color:#808080;white-space:pre;letter-spacing:0.000px;">gescannte Menge</span>
<div style="position:absolute;left:465px;top:460px;width:100px;height:21px;border:1px solid #bcbcbc;box-sizing:border-box;background:#bfdbfe"></div>
<span style="position:absolute;left:471.40px;top:460px;font-size:13px;line-height:20px;color:#808080;white-space:pre;letter-spacing:0.000px;">gesperrte Menge</span>
<div style="position:absolute;left:14px;top:602px;width:16px;height:16px;background:#fff"></div>
<div style="position:absolute;left:14px;top:602px;width:15px;height:1px;background:#808080"></div>
<div style="position:absolute;left:14px;top:602px;width:1px;height:15px;background:#808080"></div>
<div style="position:absolute;left:15px;top:603px;width:13px;height:1px;background:#000"></div>
<div style="position:absolute;left:15px;top:603px;width:1px;height:13px;background:#000"></div>
<div style="position:absolute;left:15px;top:616px;width:14px;height:1px;background:#d4d0c8"></div>
<div style="position:absolute;left:28px;top:603px;width:1px;height:14px;background:#d4d0c8"></div>
<div style="position:absolute;left:14px;top:617px;width:16px;height:1px;background:#fff"></div>
<div style="position:absolute;left:29px;top:602px;width:1px;height:16px;background:#fff"></div>
<span style="position:absolute;left:41.40px;top:600px;font-size:13px;line-height:20px;color:#000;white-space:pre;letter-spacing:-0.059px;">gescannte Versandeinheiten verarbeiten</span>
<div style="position:absolute;left:334px;top:602px;width:16px;height:16px;background:#fff"></div>
<div style="position:absolute;left:334px;top:602px;width:15px;height:1px;background:#808080"></div>
<div style="position:absolute;left:334px;top:602px;width:1px;height:15px;background:#808080"></div>
<div style="position:absolute;left:335px;top:603px;width:13px;height:1px;background:#000"></div>
<div style="position:absolute;left:335px;top:603px;width:1px;height:13px;background:#000"></div>
<div style="position:absolute;left:335px;top:616px;width:14px;height:1px;background:#d4d0c8"></div>
<div style="position:absolute;left:348px;top:603px;width:1px;height:14px;background:#d4d0c8"></div>
<div style="position:absolute;left:334px;top:617px;width:16px;height:1px;background:#fff"></div>
<div style="position:absolute;left:349px;top:602px;width:1px;height:16px;background:#fff"></div>
<span style="position:absolute;left:360.20px;top:600px;font-size:13px;line-height:20px;color:#000;white-space:pre;letter-spacing:-0.105px;">Etiketten vom Spooler drucken</span>
<div style="position:absolute;left:315px;top:630px;width:120px;height:30px;background:#d4d0c8"></div>
<div style="position:absolute;left:315px;top:630px;width:119px;height:1px;background:#fff"></div>
<div style="position:absolute;left:315px;top:630px;width:1px;height:29px;background:#fff"></div>
<div style="position:absolute;left:316px;top:631px;width:117px;height:1px;background:#d4d0c8"></div>
<div style="position:absolute;left:316px;top:631px;width:1px;height:27px;background:#d4d0c8"></div>
<div style="position:absolute;left:315px;top:659px;width:120px;height:1px;background:#404040"></div>
<div style="position:absolute;left:434px;top:630px;width:1px;height:30px;background:#404040"></div>
<div style="position:absolute;left:316px;top:658px;width:118px;height:1px;background:#808080"></div>
<div style="position:absolute;left:433px;top:631px;width:1px;height:28px;background:#808080"></div>
<span style="position:absolute;left:326.20px;top:635px;font-size:13px;line-height:20px;color:#000;white-space:pre;letter-spacing:-0.181px;">M<u>e</u>ldungen...</span>
<svg style="position:absolute;left:412px;top:637px" width="10" height="9" shape-rendering="crispEdges"><rect x="3" y="2" width="1" height="1" fill="#ffff00"/><rect x="4" y="2" width="1" height="1" fill="#ffff00"/><rect x="2" y="3" width="1" height="1" fill="#ffff00"/><rect x="3" y="3" width="1" height="1" fill="#ffff00"/><rect x="4" y="3" width="1" height="1" fill="#ffff00"/><rect x="2" y="4" width="1" height="1" fill="#ffff00"/><rect x="3" y="4" width="1" height="1" fill="#ffff00"/><rect x="6" y="4" width="1" height="1" fill="#ffff00"/><rect x="5" y="5" width="1" height="1" fill="#ffff00"/><rect x="6" y="5" width="1" height="1" fill="#ffff00"/><rect x="7" y="5" width="1" height="1" fill="#ffff00"/><rect x="5" y="6" width="1" height="1" fill="#ffff00"/><rect x="6" y="6" width="1" height="1" fill="#ffff00"/><rect x="7" y="6" width="1" height="1" fill="#ffff00"/><rect x="5" y="7" width="1" height="1" fill="#ffff00"/><rect x="6" y="7" width="1" height="1" fill="#ffff00"/><rect x="3" y="1" width="1" height="1" fill="#000"/><rect x="2" y="2" width="1" height="1" fill="#000"/><rect x="5" y="2" width="1" height="1" fill="#000"/><rect x="1" y="3" width="1" height="1" fill="#000"/><rect x="5" y="3" width="1" height="1" fill="#000"/><rect x="6" y="3" width="1" height="1" fill="#000"/><rect x="4" y="4" width="1" height="1" fill="#000"/><rect x="5" y="4" width="1" height="1" fill="#000"/><rect x="7" y="4" width="1" height="1" fill="#000"/><rect x="3" y="5" width="1" height="1" fill="#000"/><rect x="4" y="5" width="1" height="1" fill="#000"/><rect x="8" y="5" width="1" height="1" fill="#000"/><rect x="4" y="6" width="1" height="1" fill="#000"/><rect x="8" y="6" width="1" height="1" fill="#000"/><rect x="7" y="7" width="1" height="1" fill="#000"/><rect x="8" y="7" width="1" height="1" fill="#000"/><rect x="6" y="8" width="1" height="1" fill="#000"/><rect x="9" y="8" width="1" height="1" fill="#000"/></svg>
<div style="position:absolute;left:445px;top:630px;width:90px;height:30px;background:#d4d0c8"></div>
<div style="position:absolute;left:445px;top:630px;width:89px;height:1px;background:#fff"></div>
<div style="position:absolute;left:445px;top:630px;width:1px;height:29px;background:#fff"></div>
<div style="position:absolute;left:446px;top:631px;width:87px;height:1px;background:#d4d0c8"></div>
<div style="position:absolute;left:446px;top:631px;width:1px;height:27px;background:#d4d0c8"></div>
<div style="position:absolute;left:445px;top:659px;width:90px;height:1px;background:#404040"></div>
<div style="position:absolute;left:534px;top:630px;width:1px;height:30px;background:#404040"></div>
<div style="position:absolute;left:446px;top:658px;width:88px;height:1px;background:#808080"></div>
<div style="position:absolute;left:533px;top:631px;width:1px;height:28px;background:#808080"></div>
<span style="position:absolute;left:455.00px;top:635px;font-size:13px;line-height:20px;color:#000;white-space:pre;letter-spacing:0.004px;"><u>M</u>emo...</span>
<svg style="position:absolute;left:512px;top:637px" width="10" height="9" shape-rendering="crispEdges"><rect x="3" y="2" width="1" height="1" fill="#ffff00"/><rect x="4" y="2" width="1" height="1" fill="#ffff00"/><rect x="2" y="3" width="1" height="1" fill="#ffff00"/><rect x="3" y="3" width="1" height="1" fill="#ffff00"/><rect x="4" y="3" width="1" height="1" fill="#ffff00"/><rect x="2" y="4" width="1" height="1" fill="#ffff00"/><rect x="3" y="4" width="1" height="1" fill="#ffff00"/><rect x="6" y="4" width="1" height="1" fill="#ffff00"/><rect x="5" y="5" width="1" height="1" fill="#ffff00"/><rect x="6" y="5" width="1" height="1" fill="#ffff00"/><rect x="7" y="5" width="1" height="1" fill="#ffff00"/><rect x="5" y="6" width="1" height="1" fill="#ffff00"/><rect x="6" y="6" width="1" height="1" fill="#ffff00"/><rect x="7" y="6" width="1" height="1" fill="#ffff00"/><rect x="5" y="7" width="1" height="1" fill="#ffff00"/><rect x="6" y="7" width="1" height="1" fill="#ffff00"/><rect x="3" y="1" width="1" height="1" fill="#000"/><rect x="2" y="2" width="1" height="1" fill="#000"/><rect x="5" y="2" width="1" height="1" fill="#000"/><rect x="1" y="3" width="1" height="1" fill="#000"/><rect x="5" y="3" width="1" height="1" fill="#000"/><rect x="6" y="3" width="1" height="1" fill="#000"/><rect x="4" y="4" width="1" height="1" fill="#000"/><rect x="5" y="4" width="1" height="1" fill="#000"/><rect x="7" y="4" width="1" height="1" fill="#000"/><rect x="3" y="5" width="1" height="1" fill="#000"/><rect x="4" y="5" width="1" height="1" fill="#000"/><rect x="8" y="5" width="1" height="1" fill="#000"/><rect x="4" y="6" width="1" height="1" fill="#000"/><rect x="8" y="6" width="1" height="1" fill="#000"/><rect x="7" y="7" width="1" height="1" fill="#000"/><rect x="8" y="7" width="1" height="1" fill="#000"/><rect x="6" y="8" width="1" height="1" fill="#000"/><rect x="9" y="8" width="1" height="1" fill="#000"/></svg>
<div style="position:absolute;left:545px;top:629px;width:90px;height:31px;border:1px solid #000;box-sizing:border-box;background:#d4d0c8"></div>
<div style="position:absolute;left:546px;top:630px;width:88px;height:29px;border:1px solid #2a2a2a;border-right-color:#808080;border-bottom-color:#808080;box-sizing:border-box"></div>
<div style="position:absolute;left:547px;top:631px;width:86px;height:1px;background:#606060"></div>
<div style="position:absolute;left:547px;top:631px;width:1px;height:27px;background:#606060"></div>
<div style="position:absolute;left:551px;top:636px;width:80px;height:20px;border:1px dotted #000;box-sizing:border-box"></div>
<span style="position:absolute;left:556.30px;top:637px;font-size:13px;line-height:20px;color:#000;white-space:pre;letter-spacing:-0.346px;"><u>O</u>ptionen</span>
<div style="position:absolute;left:619px;top:644px;width:0;height:0;border-left:5px solid transparent;border-right:5px solid transparent;border-top:5px solid #000"></div>
<div style="position:absolute;left:645px;top:630px;width:90px;height:30px;background:#d4d0c8"></div>
<div style="position:absolute;left:645px;top:630px;width:89px;height:1px;background:#fff"></div>
<div style="position:absolute;left:645px;top:630px;width:1px;height:29px;background:#fff"></div>
<div style="position:absolute;left:646px;top:631px;width:87px;height:1px;background:#d4d0c8"></div>
<div style="position:absolute;left:646px;top:631px;width:1px;height:27px;background:#d4d0c8"></div>
<div style="position:absolute;left:645px;top:659px;width:90px;height:1px;background:#404040"></div>
<div style="position:absolute;left:734px;top:630px;width:1px;height:30px;background:#404040"></div>
<div style="position:absolute;left:646px;top:658px;width:88px;height:1px;background:#808080"></div>
<div style="position:absolute;left:733px;top:631px;width:1px;height:28px;background:#808080"></div>
<span style="position:absolute;left:660.50px;top:635px;font-size:13px;line-height:20px;color:#000;white-space:pre;letter-spacing:0.050px;"><u>S</u>peichern</span>
<div style="position:absolute;left:745px;top:630px;width:90px;height:30px;background:#d4d0c8"></div>
<div style="position:absolute;left:745px;top:630px;width:89px;height:1px;background:#fff"></div>
<div style="position:absolute;left:745px;top:630px;width:1px;height:29px;background:#fff"></div>
<div style="position:absolute;left:746px;top:631px;width:87px;height:1px;background:#d4d0c8"></div>
<div style="position:absolute;left:746px;top:631px;width:1px;height:27px;background:#d4d0c8"></div>
<div style="position:absolute;left:745px;top:659px;width:90px;height:1px;background:#404040"></div>
<div style="position:absolute;left:834px;top:630px;width:1px;height:30px;background:#404040"></div>
<div style="position:absolute;left:746px;top:658px;width:88px;height:1px;background:#808080"></div>
<div style="position:absolute;left:833px;top:631px;width:1px;height:28px;background:#808080"></div>
<span style="position:absolute;left:758.20px;top:635px;font-size:13px;line-height:20px;color:#000;white-space:pre;letter-spacing:-0.099px;"><u>A</u>bbrechen</span>
<div style="position:absolute;left:545px;top:307px;width:309px;height:323px;background:#d4d0c8"></div>
<div style="position:absolute;left:545px;top:307px;width:309px;height:1px;background:#d4d0c8"></div>
<div style="position:absolute;left:545px;top:307px;width:1px;height:322px;background:#d4d0c8"></div>
<div style="position:absolute;left:546px;top:308px;width:308px;height:1px;background:#fff"></div>
<div style="position:absolute;left:546px;top:308px;width:1px;height:320px;background:#fff"></div>
<div style="position:absolute;left:546px;top:628px;width:308px;height:1px;background:#808080"></div>
<div style="position:absolute;left:545px;top:629px;width:309px;height:1px;background:#404040"></div>
<div style="position:absolute;left:549px;top:356px;width:305px;height:1px;background:#808080"></div>
<div style="position:absolute;left:549px;top:357px;width:305px;height:1px;background:#fff"></div>
<div style="position:absolute;left:549px;top:430px;width:305px;height:1px;background:#808080"></div>
<div style="position:absolute;left:549px;top:431px;width:305px;height:1px;background:#fff"></div>
<div style="position:absolute;left:549px;top:525px;width:305px;height:1px;background:#808080"></div>
<div style="position:absolute;left:549px;top:526px;width:305px;height:1px;background:#fff"></div>
<div style="position:absolute;left:549px;top:599px;width:305px;height:1px;background:#808080"></div>
<div style="position:absolute;left:549px;top:600px;width:305px;height:1px;background:#fff"></div>
<span style="position:absolute;left:568.60px;top:310px;font-size:14px;line-height:20px;color:#000;white-space:pre;letter-spacing:-0.045px;">Fertigungsauftrag...</span>
<span style="position:absolute;left:569.60px;top:332px;font-size:14px;line-height:20px;color:#fff;white-space:pre;letter-spacing:-0.181px;">Versandeinheiten - Fertigungsaufträge...</span>
<span style="position:absolute;left:568.60px;top:331px;font-size:14px;line-height:20px;color:#8e8e8e;white-space:pre;letter-spacing:-0.181px;">Versandeinheiten - Fertigungsaufträge...</span>
<span style="position:absolute;left:568.60px;top:363px;font-size:14px;line-height:20px;color:#000;white-space:pre;letter-spacing:-0.200px;">Versandeinheiten auf Transporteinheit drucken...</span>
<span style="position:absolute;left:568.60px;top:384px;font-size:14px;line-height:20px;color:#000;white-space:pre;letter-spacing:-0.171px;">Übergabebeleg drucken...</span>
<span style="position:absolute;left:569.60px;top:406px;font-size:14px;line-height:20px;color:#fff;white-space:pre;letter-spacing:0.039px;">Produktionskonto drucken...</span>
<span style="position:absolute;left:568.60px;top:405px;font-size:14px;line-height:20px;color:#8e8e8e;white-space:pre;letter-spacing:0.039px;">Produktionskonto drucken...</span>
<span style="position:absolute;left:568.60px;top:437px;font-size:14px;line-height:20px;color:#000;white-space:pre;letter-spacing:-0.269px;">Schichtwechsel...</span>
<span style="position:absolute;left:569.60px;top:459px;font-size:14px;line-height:20px;color:#fff;white-space:pre;letter-spacing:-0.378px;">Chargenwechsel</span>
<span style="position:absolute;left:568.60px;top:458px;font-size:14px;line-height:20px;color:#8e8e8e;white-space:pre;letter-spacing:-0.378px;">Chargenwechsel</span>
<span style="position:absolute;left:569.60px;top:480px;font-size:14px;line-height:20px;color:#fff;white-space:pre;letter-spacing:-0.122px;">Chargennummer bearbeiten...</span>
<span style="position:absolute;left:568.60px;top:479px;font-size:14px;line-height:20px;color:#8e8e8e;white-space:pre;letter-spacing:-0.122px;">Chargennummer bearbeiten...</span>
<span style="position:absolute;left:569.60px;top:501px;font-size:14px;line-height:20px;color:#fff;white-space:pre;letter-spacing:-0.268px;">Artikel bearbeiten...</span>
<span style="position:absolute;left:568.60px;top:500px;font-size:14px;line-height:20px;color:#8e8e8e;white-space:pre;letter-spacing:-0.268px;">Artikel bearbeiten...</span>
<span style="position:absolute;left:568.60px;top:532px;font-size:14px;line-height:20px;color:#000;white-space:pre;letter-spacing:-0.050px;">Etiketten für Transporteinheiten...</span>
<span style="position:absolute;left:568.60px;top:553px;font-size:14px;line-height:20px;color:#000;white-space:pre;letter-spacing:-0.118px;">Artikeletiketten drucken...</span>
<span style="position:absolute;left:568.60px;top:574px;font-size:14px;line-height:20px;color:#000;white-space:pre;letter-spacing:-0.029px;">Probenetikett (Labor) zuordnen...</span>
<span style="position:absolute;left:568.60px;top:606px;font-size:14px;line-height:20px;color:#000;white-space:pre;letter-spacing:-0.346px;">Ansicht</span>
</body></html>
